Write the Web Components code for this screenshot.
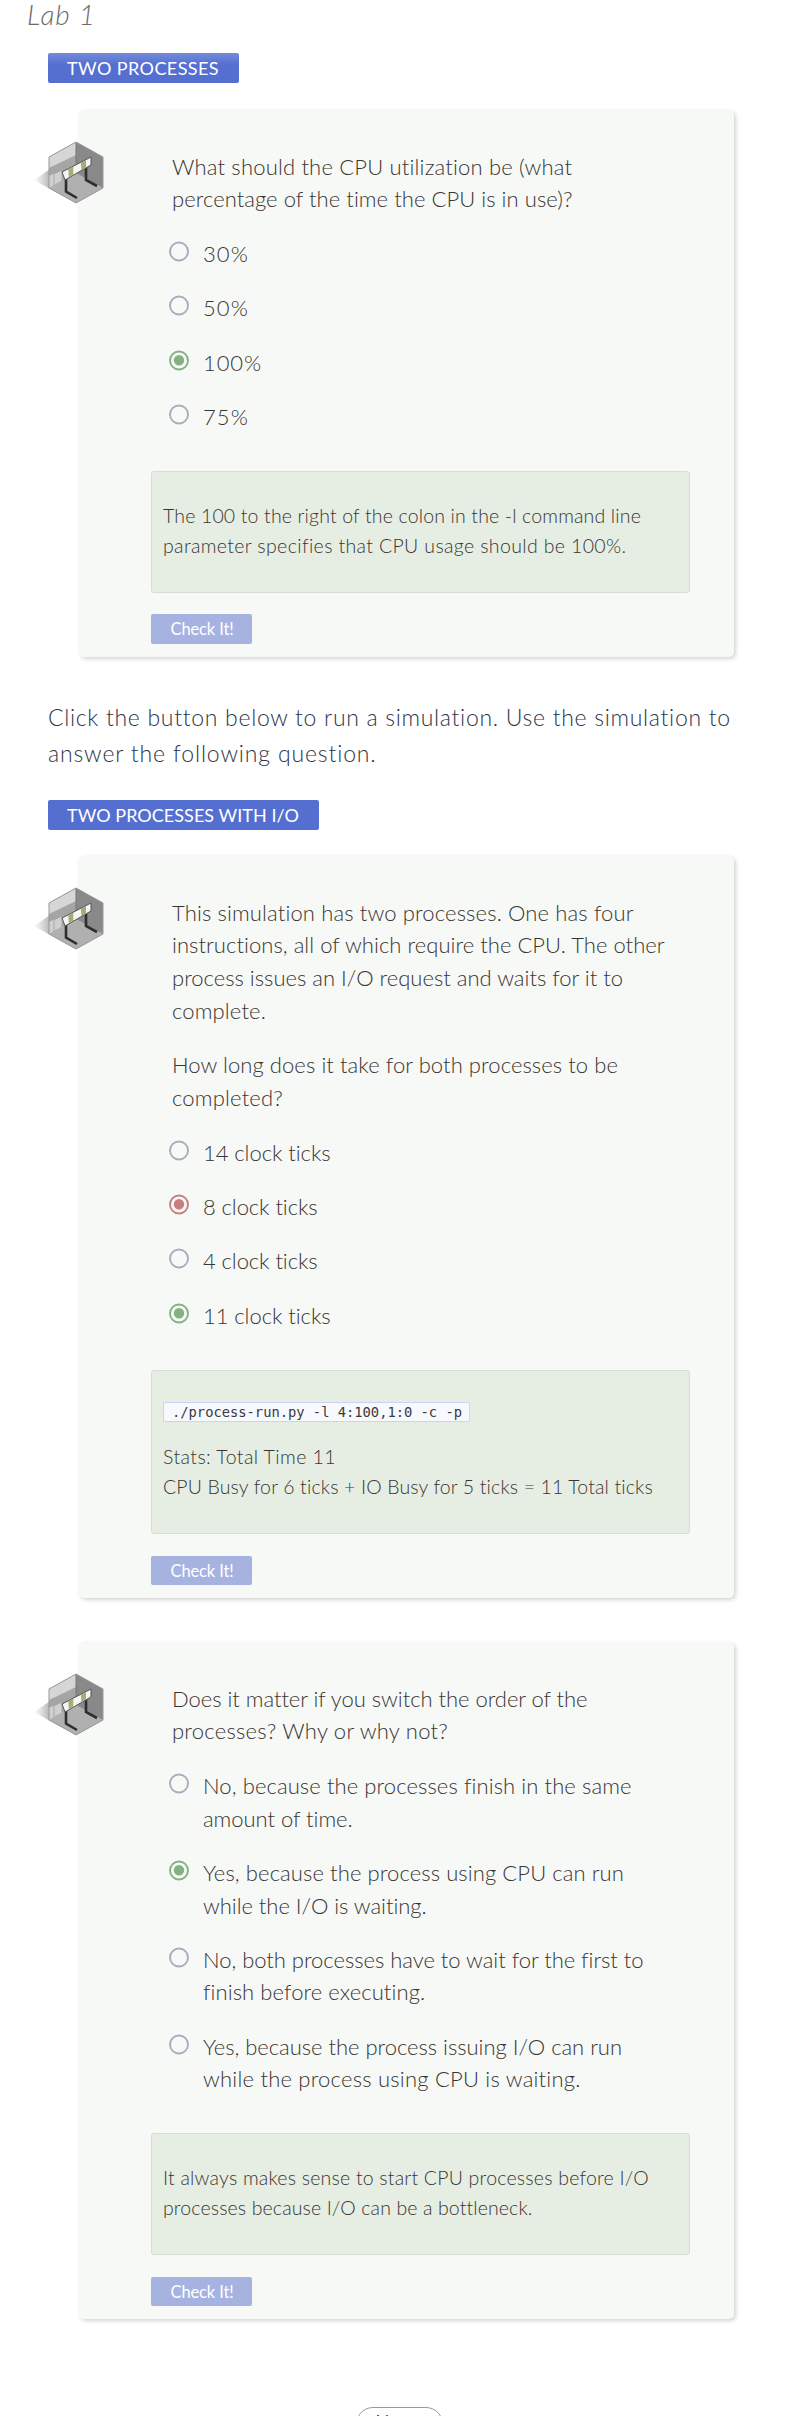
<!DOCTYPE html>
<html lang="en"><head><meta charset="utf-8"><title>Lab 1</title>
<style>
body{margin:0;background:#fff;font-family:Lato,"Open Sans",sans-serif;font-weight:300;color:#393532}
</style></head><body>
<lab-page></lab-page>
<script>
function define(name, html, setup){
  const t=document.createElement('template');t.innerHTML=html;
  customElements.define(name,class extends HTMLElement{
    connectedCallback(){
      if(this.shadowRoot)return;
      this.attachShadow({mode:'open'}).append(t.content.cloneNode(true));
      if(setup)setup(this,this.shadowRoot);
    }
  });
}
// One line of text whose tracking is adjusted to fill the width in "w".
define('text-line','<style>:host{display:block;white-space:nowrap;height:var(--lh)}span{display:inline-block;line-height:var(--lh);vertical-align:top}</style><span><slot></slot></span>',(el,r)=>{
  const s=r.querySelector('span'),n=el.textContent.length;
  s.style.letterSpacing=((+el.getAttribute('w')-s.getBoundingClientRect().width)/n)+'px';
});
define('lab-title','<style>:host{display:block;height:53px;padding-left:27px;box-sizing:border-box;font-size:28px;font-style:italic;color:#6c6c6c;--lh:29px}</style><slot></slot>');
define('section-tag','<style>:host{display:block;width:max-content;height:30px;margin-left:48px;padding:0 20px 0 19px;box-sizing:border-box;border-radius:2px;background:#556fd1;color:#fff;font-size:18px;font-weight:400;--lh:31px}:host([shaded]){background:linear-gradient(#738bdb,#556fd1 40%)}</style><slot></slot>');
define('lab-note','<style>:host{display:block;margin:42px 0 29px 48px;font-size:23px;color:#2f3448;--lh:36px}</style><slot></slot>');
define('cube-icon',`<style>:host{display:block;width:70px;height:64px}svg{display:block}</style>
<svg width="70" height="64" viewBox="0 0 70 64"><defs><linearGradient id="s"><stop stop-color="#ccc" stop-opacity="0.1"/><stop offset="1" stop-color="#b4b4b4"/></linearGradient></defs>
<path d="M0 39 16 28V48Z" fill="url(#s)"/>
<path d="M42 1 69 16V47L42 62 15 47V16Z" fill="#adadad"/>
<path d="M42 1V33L15 47V16Z" fill="#a5a5a5"/><path d="M42 1V14L15 27V16Z" fill="#d6d6d6"/>
<path d="M42 1 69 16V47L42 32Z" fill="#898989"/>
<path d="M15 35 28 30V40L15 47Z" fill="#bcbcbc"/><path d="M15 35 19 33V45L15 47ZM21 33 27 30V40L21 43Z" fill="#d0d0d0"/>
<path d="M15 47 42 32 69 47 42 62Z" fill="#b0b0b0"/><path d="M42 1V32" stroke="#777" fill="none"/>
<path d="M42 1 69 16V47L42 62 15 47V16Z" fill="none" stroke="#999"/>
<path d="M32 37V50.5L43 57M52 25V39L63 45" fill="none" stroke="#2e2e2e" stroke-width="2.6"/>
<path d="M28 31 57 16V24L31 39Z" fill="#f5f5f5" stroke="#555"/>
<path d="M34.3 28.2 39.3 25.6V33.7L34.8 36.3ZM46.9 21.7 52 19V26.4L47.4 29Z" fill="#a9ab76"/></svg>`);
define('quiz-card',`<style>:host{display:grid;grid-template-columns:70px 1fr;margin-left:34px;width:700px;position:relative;isolation:isolate}
cube-icon{margin-top:31px;grid-area:1/1}
.c{grid-column:1/3;grid-row:1;margin-left:45px;box-sizing:border-box;background:#f7f9f7;border-radius:5px;box-shadow:2px 2px 4px rgba(0,0,0,.16),0 0 3px rgba(0,0,0,.03);padding:0 44px 13px 72px;z-index:-1}</style>
<div class="c"><slot></slot></div><cube-icon></cube-icon>`);
define('quiz-prompt','<style>:host{display:block;padding:40.5px 0 1.5px 21px;font-size:22px;--lh:32.7px}::slotted(.gap){margin-top:22px}</style><slot></slot>');
define('quiz-option',`<style>:host{display:flex;padding:21.7px 0 0 18px;font-size:22px;--lh:32.6px;--c:#aaabbf}
:host([mark=right]){--c:#84b184}:host([mark=wrong]){--c:#c77e7e}
div{margin:-1px 0 1px}
svg{flex:none;margin:0 14px 0 0;display:block}circle{fill:none;stroke:var(--c);stroke-width:1.9}.d{fill:var(--c);stroke:none;display:none}:host([mark]) .d{display:block}</style>
<svg width="20" height="24" viewBox="0 0 20 24"><circle cx="10" cy="12.5" r="9"/><circle class="d" cx="10" cy="12.3" r="5.2"/></svg><div><slot></slot></div>`);
define('quiz-feedback','<style>:host{display:block;height:var(--h,122px);margin-top:36.5px;box-sizing:border-box;border:1px solid #d5ddd4;border-radius:3px;background:#e6eee4;padding:29px 11px 0;font-size:19.5px;--lh:30px}</style><slot></slot>');
define('code-chip','<style>:host{display:block;width:307px;height:20px;box-sizing:border-box;margin:2px 0 20px;border:1px solid #c9d4f3;border-radius:2px;background:#f8f9fe;padding-left:8px;color:#3b3b3b;font:400 13.8px "DejaVu Sans Mono",monospace;--lh:18px}</style><slot></slot>');
define('check-button','<style>:host{display:block;width:101px;height:30px;margin-top:21px;box-sizing:border-box;padding-left:19.5px;border-radius:2px;background:#a6b3e1;color:#fff;font-size:16.5px;font-weight:400;--lh:31px}</style><slot></slot>');
define('next-button','<style>:host{display:block;width:87px;height:34px;margin:88px 0 0 356px;box-sizing:border-box;border:1px solid #999;border-radius:17px;text-align:center;font-size:18px;font-weight:400;line-height:26px;color:#3d4256}</style><slot></slot>');
define('lab-page',`<style>:host{display:block;height:2416px;overflow:hidden}</style>
<lab-title><text-line w="69">Lab 1</text-line></lab-title>
<section-tag shaded><text-line w="152">TWO PROCESSES</text-line></section-tag>
<quiz-card style="margin-top:27px;height:547px">
<quiz-prompt><text-line w="401">What should the CPU utilization be (what</text-line><text-line w="401">percentage of the time the CPU is in use)?</text-line></quiz-prompt>
<quiz-option><text-line w="46">30%</text-line></quiz-option><quiz-option><text-line w="46">50%</text-line></quiz-option><quiz-option mark="right"><text-line w="59">100%</text-line></quiz-option><quiz-option><text-line w="46">75%</text-line></quiz-option>
<quiz-feedback><text-line w="478">The 100 to the right of the colon in the -l command line</text-line><text-line w="463">parameter specifies that CPU usage should be 100%.</text-line></quiz-feedback>
<check-button><text-line w="63">Check It!</text-line></check-button></quiz-card>
<lab-note><text-line w="683">Click the button below to run a simulation. Use the simulation to</text-line><text-line w="329">answer the following question.</text-line></lab-note>
<section-tag><text-line w="232">TWO PROCESSES WITH I/O</text-line></section-tag>
<quiz-card style="margin-top:26px;height:742px">
<quiz-prompt><text-line w="462">This simulation has two processes. One has four</text-line><text-line w="493">instructions, all of which require the CPU. The other</text-line><text-line w="451">process issues an I/O request and waits for it to</text-line><text-line w="94">complete.</text-line><text-line class="gap" w="446">How long does it take for both processes to be</text-line><text-line w="111">completed?</text-line></quiz-prompt>
<quiz-option><text-line w="128">14 clock ticks</text-line></quiz-option><quiz-option mark="wrong"><text-line w="115">8 clock ticks</text-line></quiz-option><quiz-option><text-line w="115">4 clock ticks</text-line></quiz-option><quiz-option mark="right"><text-line w="128">11 clock ticks</text-line></quiz-option>
<quiz-feedback style="--h:164px"><code-chip><text-line w="290">./process-run.py -l 4:100,1:0 -c -p</text-line></code-chip><text-line w="173">Stats: Total Time 11</text-line><text-line w="491">CPU Busy for 6 ticks + IO Busy for 5 ticks = 11 Total ticks</text-line></quiz-feedback>
<check-button style="margin-top:22px;height:29px"><text-line w="63">Check It!</text-line></check-button></quiz-card>
<quiz-card style="margin-top:44px;height:677px">
<quiz-prompt><text-line w="415">Does it matter if you switch the order of the</text-line><text-line w="276">processes? Why or why not?</text-line></quiz-prompt>
<quiz-option><text-line w="428">No, because the processes finish in the same</text-line><text-line w="150">amount of time.</text-line></quiz-option>
<quiz-option mark="right"><text-line w="421">Yes, because the process using CPU can run</text-line><text-line w="224">while the I/O is waiting.</text-line></quiz-option>
<quiz-option><text-line w="440">No, both processes have to wait for the first to</text-line><text-line w="222">finish before executing.</text-line></quiz-option>
<quiz-option><text-line w="419">Yes, because the process issuing I/O can run</text-line><text-line w="378">while the process using CPU is waiting.</text-line></quiz-option>
<quiz-feedback><text-line w="486">It always makes sense to start CPU processes before I/O</text-line><text-line w="369">processes because I/O can be a bottleneck.</text-line></quiz-feedback>
<check-button style="margin-top:22px;height:29px"><text-line w="63">Check It!</text-line></check-button></quiz-card>
<next-button>Next ›</next-button>`);
</script></body></html>
